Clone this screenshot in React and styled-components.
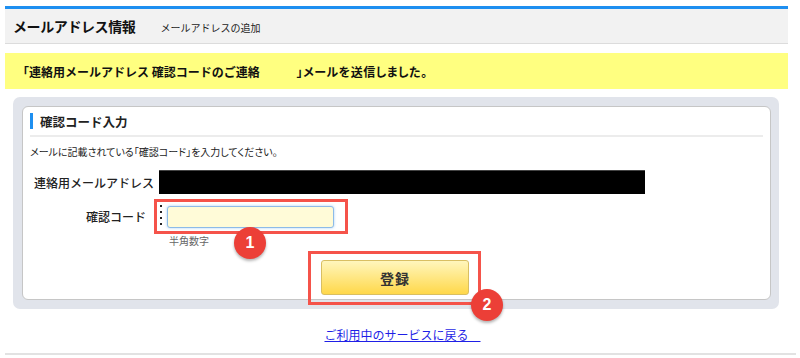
import React from 'react';
import styled, { createGlobalStyle } from 'styled-components';

const Global = createGlobalStyle`
  body {
    margin: 0;
    background: #fff;
    font-family: "Noto Sans CJK JP", "Noto Sans", sans-serif;
    color: #222;
  }
`;

const Page = styled.div`
  width: 783px;
  margin-left: 5px;
  padding-top: 6px;
`;

const Header = styled.div`
  border-top: 3px solid #1e8ff0;
  background: #f2f2f2;
  border-bottom: 1px solid #dcdcdc;
  height: 34px;
  display: flex;
  align-items: center;
  padding-left: 8px;

  h1 {
    margin: 0;
    font-size: 14px;
    font-weight: 700;
    color: #111;
    letter-spacing: -0.4px;
  }
  span {
    margin-left: 25px;
    font-size: 10px;
    color: #222;
    padding-top: 2px;
  }
`;

const Notice = styled.div`
  margin-top: 9px;
  background: #ffff80;
  height: 36px;
  display: flex;
  align-items: center;
  padding-left: 12px;
  font-size: 12px;
  font-weight: 700;
  color: #111;
  white-space: pre;

  .gap {
    display: inline-block;
    width: 37px;
  }
  .tail {
    font-feature-settings: "palt";
    letter-spacing: 0.5px;
  }
`;

const Panel = styled.div`
  margin: 8px 9px 0 8px;
  background: #e1e4eb;
  border-radius: 7px;
  padding: 9px 8px 9px 9px;
`;

const Card = styled.div`
  background: #fff;
  border: 1px solid #c6c6c6;
  border-radius: 6px;
  padding: 0 7px 4px;
`;

const SectionTitle = styled.div`
  padding: 6px 0;
  border-bottom: 2px solid #ececec;

  h2 {
    margin: 0;
    height: 16px;
    display: flex;
    align-items: center;
    border-left: 3px solid #1e8ff0;
    padding-left: 7px;
    font-size: 12.5px;
    font-weight: 700;
    color: #222;
  }
`;

const Description = styled.p`
  margin: 8px 0 0;
  font-size: 10px;
  line-height: 14px;
  color: #222;
  font-feature-settings: "palt";
`;

const Row = styled.div`
  display: flex;
  align-items: center;
  margin-top: ${p => p.$top}px;
`;

const Label = styled.div`
  width: 124px;
  box-sizing: border-box;
  padding-right: ${p => p.$pad || 0}px;
  text-align: right;
  font-size: 12px;
  font-weight: 500;
  color: #222;
`;

const Masked = styled.div`
  margin-left: 5px;
  width: 486px;
  height: 24px;
  background: #000;
  border-top: 1px solid #444;
  box-sizing: border-box;
`;

const Frame = styled.div`
  position: relative;
  display: flex;
  align-items: center;
  gap: 5px;
  border: 3px solid #f5534a;
  padding: 4px 11px 3px 3px;
`;

const Dots = styled.div`
  width: 2px;
  height: 24px;
  align-self: flex-start;
  margin-top: -3px;
  background-image: radial-gradient(circle, #222 0.9px, transparent 1.2px);
  background-size: 2px 6px;
`;

const CodeInput = styled.input`
  width: 167px;
  height: 22px;
  box-sizing: border-box;
  background: #fffbd8;
  border: 1px solid #8dbbe8;
  border-radius: 3px;
  box-shadow: 0 0 3px #a9d0f6;
  outline: none;
  padding: 0 4px;
`;

const Note = styled.div`
  margin-left: 139px;
  font-size: 10px;
  line-height: 13px;
  color: #666;
`;

const ButtonRow = styled.div`
  display: flex;
  justify-content: center;
  margin-top: 13px;
  padding-right: 3px;
`;

const ButtonWrap = styled.div`
  position: relative;

  &::after {
    content: "";
    position: absolute;
    top: -9px;
    left: -13px;
    right: -12px;
    bottom: -10px;
    border: 3px solid #f5534a;
    pointer-events: none;
  }
`;

const SubmitButton = styled.button`
  width: 148px;
  height: 35px;
  border: 1px solid #d9bf62;
  border-radius: 3px;
  background: linear-gradient(#fff6bd, #ffd84a);
  font-family: inherit;
  font-size: 14px;
  font-weight: 700;
  color: #333;
  letter-spacing: 1px;
`;

const Badge = styled.div`
  position: absolute;
  z-index: 2;
  left: ${p => p.$left}px;
  top: ${p => p.$top}px;
  width: 32px;
  height: 32px;
  border-radius: 50%;
  background: #ec3f37;
  color: #fff;
  font-family: "Liberation Sans", Arial, sans-serif;
  font-weight: 700;
  font-size: 16px;
  display: flex;
  align-items: center;
  justify-content: center;
  box-shadow: 0 2px 3px rgba(0, 0, 0, 0.3);
`;

const LinkRow = styled.div`
  text-align: center;
  margin-top: 18px;
  font-size: 12px;
  line-height: 16px;

  a {
    color: #1f1fe6;
    text-decoration: underline;
  }
`;

const Rule = styled.div`
  margin: 10px -8px 0 0;
  border-top: 2px solid #e2e2e2;
`;

export default function App() {
  return (
    <Page>
      <Global />
      <Header>
        <h1>メールアドレス情報</h1>
        <span>メールアドレスの追加</span>
      </Header>
      <Notice>
        <span>「連絡用メールアドレス 確認コードのご連絡</span>
        <span className="gap" />
        <span className="tail">」メールを送信しました。</span>
      </Notice>
      <Panel>
        <Card>
          <SectionTitle>
            <h2>確認コード入力</h2>
          </SectionTitle>
          <Description>メールに記載されている「確認コード」を入力してください。</Description>
          <Row $top={11}>
            <Label>連絡用メールアドレス</Label>
            <Masked />
          </Row>
          <Row $top={5}>
            <Label $pad={8}>確認コード</Label>
            <Frame>
              <Dots />
              <CodeInput type="text" />
              <Badge $left={77} $top={25}>1</Badge>
            </Frame>
          </Row>
          <Note>半角数字</Note>
          <ButtonRow>
            <ButtonWrap>
              <SubmitButton>登録</SubmitButton>
              <Badge $left={150} $top={29}>2</Badge>
            </ButtonWrap>
          </ButtonRow>
        </Card>
      </Panel>
      <LinkRow>
        <a href="#">ご利用中のサービスに戻る　</a>
      </LinkRow>
      <Rule />
    </Page>
  );
}
